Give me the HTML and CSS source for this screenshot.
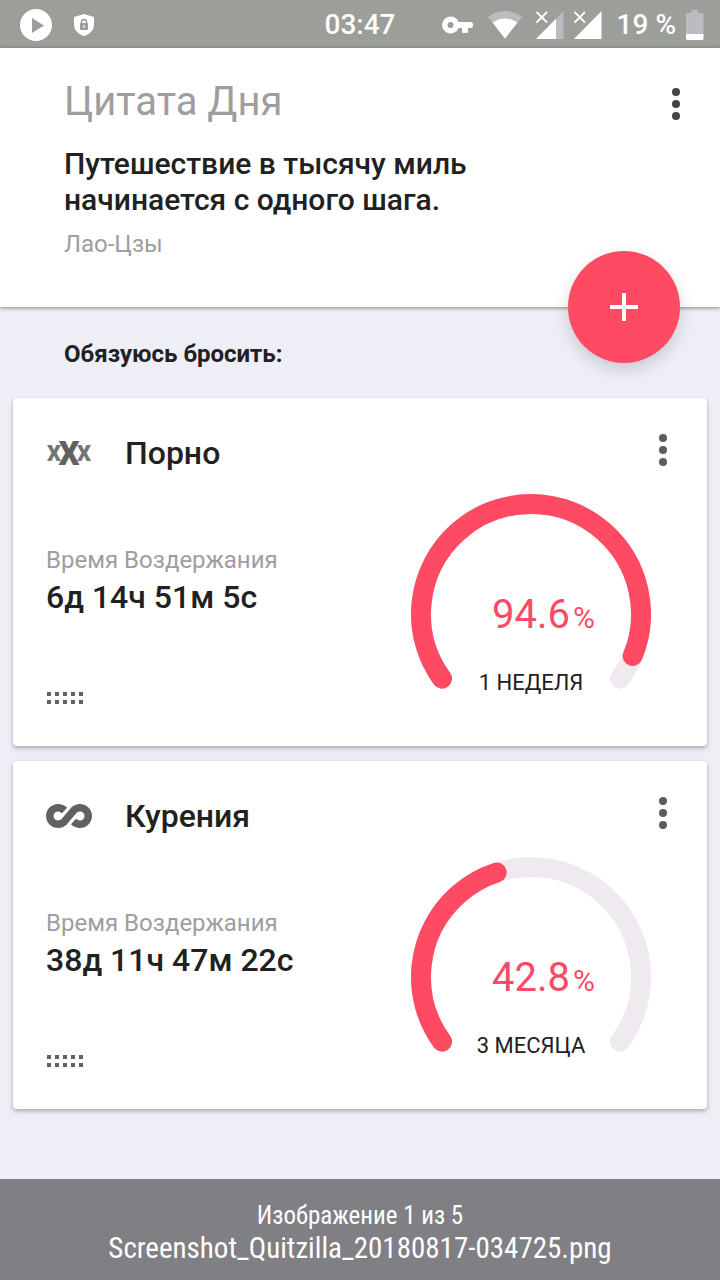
FILE: index.html
```
<!DOCTYPE html>
<html lang="ru">
<head>
    <meta charset="UTF-8">
    <meta name="viewport" content="width=device-width, initial-scale=1.0">
    <title>Quitzilla</title>
    <link rel="stylesheet" href="styles.css">
</head>
<body>
    <div class="status-bar">
        <div class="status-left">
            <svg width="32" height="32" viewBox="0 0 32 32">
                <path fill="#fff" fill-rule="evenodd" d="M16 0a16 16 0 1 0 0 32a16 16 0 1 0 0-32zM12 9v15l12-7.500z"/>
            </svg>
            <svg width="20" height="22" viewBox="0 0 20 22">
                <path fill="#fff" d="M10 0L20 3v8c0 5-4 9-10 11C4 20 0 16 0 11V3z"/>
                <path fill="none" stroke="#9b9e99" stroke-width="1.500" d="M7.500 9.500V8a2.500 2.500 0 0 1 5 0v1.500"/>
                <rect x="6" y="9" width="8" height="7" rx="0.500" fill="#9b9e99"/>
                <path stroke="#fff" stroke-width="1.200" d="M10 11v3"/>
            </svg>
        </div>
        <div class="clock">03:47</div>
        <div class="status-right">
            <svg class="key" width="31" height="18" viewBox="0 0 31 18">
                <path fill="#fff" fill-rule="evenodd" d="M8.500 0.500a8.500 8.500 0 1 0 8 11.500H20v3.500a1.500 1.500 0 0 0 1.500 1.500h3a1.500 1.500 0 0 0 1.500-1.500V12h2.500a2.500 2.500 0 0 0 2.500-2.500V8.500a2.500 2.500 0 0 0-2.500-2.500H16.500A8.500 8.500 0 0 0 8.500 0.500zM8.500 6a3 3 0 1 1 0 6a3 3 0 1 1 0-6z"/>
            </svg>
            <svg class="wifi" width="34" height="28" viewBox="0 0 34 28">
                <path fill="#bdbbc0" d="M17 0C10.500 0 4.500 2.200 0 6l17 22L34 6C29.500 2.200 23.500 0 17 0z"/>
                <path fill="#fff" d="M17 7.500c-4.800 0-9 1.500-12.200 4.200L17 27.500l12.200-15.800C26 9 21.800 7.500 17 7.500z"/>
            </svg>
            <svg width="28" height="28" viewBox="0 0 28 28">
                <path fill="#bdbbc0" d="M27.500 0v28H0z"/>
                <path fill="#fff" d="M20 7.800V28H0z"/>
                <path stroke="#fff" stroke-width="1.800" d="M0.500 1l10.500 10.500M11 1L0.500 11.500"/>
            </svg>
            <svg width="28" height="28" viewBox="0 0 28 28">
                <path fill="#fff" d="M27.500 0v28H0z"/>
                <path stroke="#fff" stroke-width="1.800" d="M0.500 1l10.500 10.500M11 1L0.500 11.500"/>
            </svg>
            <span class="charge">19 %</span>
            <svg width="18" height="30" viewBox="0 0 18 30">
                <path fill="#bdbbc0" d="M5.500 0h6v3H16a1.500 1.500 0 0 1 1.500 1.500V25H0V4.500A1.500 1.500 0 0 1 1.500 3h4z"/>
                <path fill="#fff" d="M0 24h17.500v4.500A1.500 1.500 0 0 1 16 30H1.500A1.500 1.500 0 0 1 0 28.500z"/>
            </svg>
        </div>
    </div>

    <header class="quote">
        <div class="quote-text">
            <h1>Цитата Дня</h1>
            <blockquote>Путешествие в тысячу миль начинается с одного шага.</blockquote>
            <p class="author">Лао-Цзы</p>
        </div>
        <button class="menu" aria-label="Меню">
            <svg width="8" height="32" viewBox="0 0 8 32"><circle cx="4" cy="4" r="4"/><circle cx="4" cy="16" r="4"/><circle cx="4" cy="28" r="4"/></svg>
        </button>
        <button class="add" aria-label="Добавить">
            <svg width="28" height="28" viewBox="0 0 28 28"><path stroke="#fff" stroke-width="4" d="M14 0v28M0 14h28"/></svg>
        </button>
    </header>

    <main>
        <h2 class="pledge">Обязуюсь бросить:</h2>

        <section class="card">
            <div class="card-head">
                <svg class="habit-icon" width="46" height="40" viewBox="0 0 46 40" aria-hidden="true">
                    <text class="x-small" x="8" y="28">X</text>
                    <text class="x-small" x="38" y="28">X</text>
                    <text class="x-big" x="23" y="32">X</text>
                </svg>
                <h3>Порно</h3>
                <button class="menu" aria-label="Меню">
                    <svg width="8" height="32" viewBox="0 0 8 32"><circle cx="4" cy="4" r="4"/><circle cx="4" cy="16" r="4"/><circle cx="4" cy="28" r="4"/></svg>
                </button>
            </div>
            <div class="card-body">
                <div class="info">
                    <p class="label">Время Воздержания</p>
                    <p class="time">6д 14ч 51м 5с</p>
                    <svg class="handle" width="37" height="12" viewBox="0 0 37 12">
                        <path stroke="#616161" stroke-width="4" stroke-dasharray="4 4" d="M0 2h37M0 10h37"/>
                    </svg>
                </div>
                <div class="gauge">
                    <svg width="240" height="200" viewBox="0 0 240 200">
                        <path class="track" d="M31 184.700A110 110 0 1 1 209 184.700"/>
                        <path class="value" pathLength="100" stroke-dasharray="94.600 200" d="M31 184.700A110 110 0 1 1 209 184.700"/>
                    </svg>
                    <p class="percent">94.6<span>%</span></p>
                    <p class="period">1 НЕДЕЛЯ</p>
                </div>
            </div>
        </section>

        <section class="card">
            <div class="card-head">
                <svg class="habit-icon" width="46" height="24" viewBox="0 0 46 24">
                    <path fill="none" stroke="#616161" stroke-width="7.500" d="M18.500 6.500C16.500 4.600 14.500 3.800 12 3.800a8.200 8.200 0 0 0 0 16.400c2.500 0 4.500-.900 6.200-2.500L27.800 6.300C29.500 4.700 31.500 3.800 34 3.800a8.200 8.200 0 0 1 0 16.400c-2.500 0-4.500-.800-6.500-2.700"/>
                </svg>
                <h3>Курения</h3>
                <button class="menu" aria-label="Меню">
                    <svg width="8" height="32" viewBox="0 0 8 32"><circle cx="4" cy="4" r="4"/><circle cx="4" cy="16" r="4"/><circle cx="4" cy="28" r="4"/></svg>
                </button>
            </div>
            <div class="card-body">
                <div class="info">
                    <p class="label">Время Воздержания</p>
                    <p class="time">38д 11ч 47м 22с</p>
                    <svg class="handle" width="37" height="12" viewBox="0 0 37 12">
                        <path stroke="#616161" stroke-width="4" stroke-dasharray="4 4" d="M0 2h37M0 10h37"/>
                    </svg>
                </div>
                <div class="gauge">
                    <svg width="240" height="200" viewBox="0 0 240 200">
                        <path class="track" d="M31 184.700A110 110 0 1 1 209 184.700"/>
                        <path class="value" pathLength="100" stroke-dasharray="42.800 200" d="M31 184.700A110 110 0 1 1 209 184.700"/>
                    </svg>
                    <p class="percent">42.8<span>%</span></p>
                    <p class="period">3 МЕСЯЦА</p>
                </div>
            </div>
        </section>
    </main>

    <footer class="caption">
        <p class="counter">Изображение 1 из 5</p>
        <p class="filename">Screenshot_Quitzilla_20180817-034725.png</p>
    </footer>
</body>
</html>
```
FILE: styles.css
```
* {
    margin: 0;
    padding: 0;
    box-sizing: border-box;
}
body {
    display: flex;
    flex-direction: column;
    min-height: 100vh;
    background: #eeeef7;
    color: #212121;
    font-family: Roboto, sans-serif;
}
svg {
    display: block;
    flex-shrink: 0;
}
button {
    border: none;
    background: none;
    cursor: pointer;
}

/* status bar */
.status-bar {
    display: grid;
    grid-template-columns: 1fr auto 1fr;
    align-items: center;
    height: 48px;
    padding: 1px 16px 0;
    background: #9b9e99;
    color: #fff;
    font-size: 28px;
    font-weight: 500;
    line-height: 48px;
}
.status-left {
    display: flex;
    align-items: center;
    gap: 22px;
    padding-left: 4px;
}
.status-right {
    display: flex;
    justify-content: flex-end;
    align-items: center;
    gap: 10px;
}
.key {
    margin-right: 5px;
}
.wifi {
    margin-right: 4px;
}
.charge {
    margin-left: 5px;
    white-space: nowrap;
}

/* quote */
.quote {
    position: relative;
    display: flex;
    justify-content: space-between;
    align-items: flex-start;
    padding: 30px 40px 47px 64px;
    background: #fff;
    box-shadow: 0 1px 4px rgba(0, 0, 0, 0.45);
}
.quote-text {
    max-width: 440px;
}
.quote h1 {
    color: #9e9e9e;
    font-size: 40px;
    font-weight: 400;
    line-height: 48px;
}
.quote blockquote {
    margin-top: 20px;
    font-size: 30px;
    font-weight: 500;
    line-height: 36px;
}
.author {
    margin-top: 10px;
    color: #9e9e9e;
    font-size: 24px;
    line-height: 32px;
}
.menu {
    fill: #424242;
}
.quote .menu {
    margin-top: 10px;
}
.add {
    position: absolute;
    right: 40px;
    bottom: -56px;
    display: flex;
    justify-content: center;
    align-items: center;
    width: 112px;
    height: 112px;
    border-radius: 50%;
    background: #ff4a64;
    box-shadow: 0 6px 16px rgba(0, 0, 0, 0.16);
}

/* habits */
main {
    flex: 1;
    padding: 31px 13px 70px;
}
.pledge {
    margin: 0 0 28px 51px;
    font-size: 24px;
    font-weight: 700;
    line-height: 32px;
}
.card {
    height: 348px;
    padding: 35px 40px 0 33px;
    background: #fff;
    border-radius: 4px;
    box-shadow: 0 2px 4px rgba(0, 0, 0, 0.3);
}
.card + .card {
    margin-top: 15px;
}
.card-head {
    display: flex;
    align-items: center;
    height: 40px;
}
.card-head h3 {
    flex: 1;
    margin-left: 33px;
    font-size: 32px;
    font-weight: 500;
    line-height: 40px;
}
.card-head .menu {
    margin-bottom: 6px;
    fill: #5c5c5c;
}
.habit-icon {
    overflow: visible;
}
.habit-icon text {
    font-weight: 900;
    text-anchor: middle;
}
.x-small {
    fill: #757575;
    font-size: 22px;
}
.x-big {
    fill: #616161;
    font-size: 33px;
}
.card-body {
    display: flex;
    justify-content: space-between;
    padding: 21px 16px 0 0;
}
.info {
    padding-top: 50px;
}
.label {
    color: #9e9e9e;
    font-size: 24px;
    line-height: 32px;
}
.time {
    margin-top: 1px;
    font-size: 32px;
    font-weight: 500;
    line-height: 40px;
}
.handle {
    margin: 75px 0 0 1px;
}

/* gauge: ring and texts share one grid cell */
.gauge {
    display: grid;
    justify-items: center;
    align-items: start;
}
.gauge > * {
    grid-area: 1 / 1;
}
.gauge path {
    fill: none;
    stroke-width: 20;
    stroke-linecap: round;
}
.track {
    stroke: #efeaef;
}
.value {
    stroke: #ff4a64;
}
.percent {
    position: relative;
    margin-top: 97px;
    color: #fb4a65;
    font-size: 40px;
    line-height: 48px;
}
.percent span {
    position: absolute;
    left: 100%;
    padding-left: 3px;
    font-size: 30px;
    line-height: 54px;
}
.period {
    margin-top: 174px;
    font-size: 22px;
    line-height: 30px;
}

/* caption */
.caption {
    padding: 21px 16px 14px;
    background: #807f84;
    color: #fff;
    font-family: "Roboto Condensed", Roboto, sans-serif;
    text-align: center;
}
.counter {
    font-size: 25px;
    line-height: 31px;
}
.filename {
    font-size: 29px;
    line-height: 35px;
}
```
